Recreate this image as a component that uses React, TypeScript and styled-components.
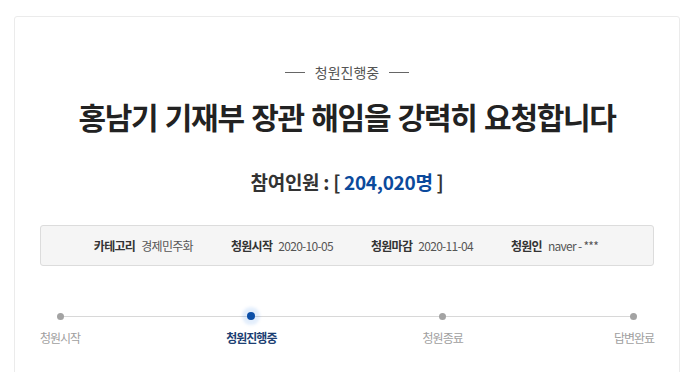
import React from "react";
import styled, { createGlobalStyle } from "styled-components";

const Global = createGlobalStyle`
  html, body { margin: 0; padding: 0; background: #fff; }
  body { font-family: "Noto Sans CJK KR", "Noto Sans", sans-serif; }
`;

const Page = styled.div`
  padding: 16px 0 0 14px;
  overflow: hidden;
  height: 372px;
  box-sizing: border-box;
`;

const Card = styled.section`
  border: 1px solid #ebebeb;
  border-radius: 3px;
  padding: 45px 25px 40px;
  display: flex;
  flex-direction: column;
  align-items: stretch;
  width: 666px;
  box-sizing: border-box;
`;

const Status = styled.div`
  display: flex;
  align-items: center;
  justify-content: center;
  gap: 10px;
  font-size: 14px;
  line-height: 20px;
  color: #555;
  &::before, &::after {
    content: "";
    width: 20px;
    height: 1px;
    background: #666;
  }
`;

const Title = styled.h1`
  margin: 14px 0 0;
  text-align: center;
  font-size: 30px;
  line-height: 40px;
  font-weight: 700;
  color: #222;
  letter-spacing: -1.3px;
  word-spacing: 2px;
`;

const Count = styled.p`
  margin: 33px 0 0;
  text-align: center;
  font-size: 19px;
  line-height: 26px;
  font-weight: 700;
  color: #333;
  letter-spacing: -0.3px;
`;

const Num = styled.span`
  color: #0b4a9c;
`;

const InfoBox = styled.div`
  margin-top: 30px;
  height: 41px;
  box-sizing: border-box;
  border: 1px solid #dcdcdc;
  border-radius: 3px;
  background: #f5f5f5;
  display: flex;
  align-items: center;
  justify-content: center;
  gap: 38px;
  padding-right: 2px;
`;

const InfoItem = styled.div`
  display: flex;
  align-items: center;
  gap: 6px;
  font-size: 12px;
  letter-spacing: -0.7px;
`;

const InfoLabel = styled.span`
  font-weight: 700;
  color: #333;
`;

const InfoValue = styled.span`
  color: #555;
`;

const Steps = styled.ol`
  list-style: none;
  margin: 40px 0 0;
  padding: 0;
  display: flex;
  justify-content: space-between;
  position: relative;
  &::before {
    content: "";
    position: absolute;
    top: 10px;
    left: 20px;
    right: 20px;
    height: 1px;
    background: #d8d8d8;
  }
`;

const Step = styled.li`
  width: 40px;
  display: flex;
  flex-direction: column;
  align-items: center;
  gap: 4px;
  position: relative;
`;

const DotWrap = styled.div`
  width: 20px;
  height: 20px;
  display: flex;
  align-items: center;
  justify-content: center;
`;

const Dot = styled.span<{ $active?: boolean }>`
  width: ${(p) => (p.$active ? 8 : 7)}px;
  height: ${(p) => (p.$active ? 8 : 7)}px;
  border-radius: 50%;
  background: ${(p) => (p.$active ? "#0b4fa8" : "#a3a3a3")};
  box-shadow: ${(p) =>
    p.$active ? "0 0 3px 5px rgba(40,120,230,0.13)" : "none"};
`;

const StepLabel = styled.span<{ $active?: boolean }>`
  white-space: nowrap;
  font-size: 12px;
  line-height: 16px;
  letter-spacing: -1px;
  font-weight: ${(p) => (p.$active ? 700 : 400)};
  color: ${(p) => (p.$active ? "#1d3f73" : "#a0a0a0")};
`;

const info = [
  ["카테고리", "경제민주화"],
  ["청원시작", "2020-10-05"],
  ["청원마감", "2020-11-04"],
  ["청원인", "naver - ***"],
];

const steps = ["청원시작", "청원진행중", "청원종료", "답변완료"];

export default function App() {
  return (
    <Page>
      <Global />
      <Card>
        <Status>청원진행중</Status>
        <Title>홍남기 기재부 장관 해임을 강력히 요청합니다</Title>
        <Count>
          참여인원 : [ <Num>204,020명</Num> ]
        </Count>
        <InfoBox>
          {info.map(([l, v]) => (
            <InfoItem key={l}>
              <InfoLabel>{l}</InfoLabel>
              <InfoValue>{v}</InfoValue>
            </InfoItem>
          ))}
        </InfoBox>
        <Steps>
          {steps.map((s, i) => (
            <Step key={s}>
              <DotWrap>
                <Dot $active={i === 1} />
              </DotWrap>
              <StepLabel $active={i === 1}>{s}</StepLabel>
            </Step>
          ))}
        </Steps>
      </Card>
    </Page>
  );
}
